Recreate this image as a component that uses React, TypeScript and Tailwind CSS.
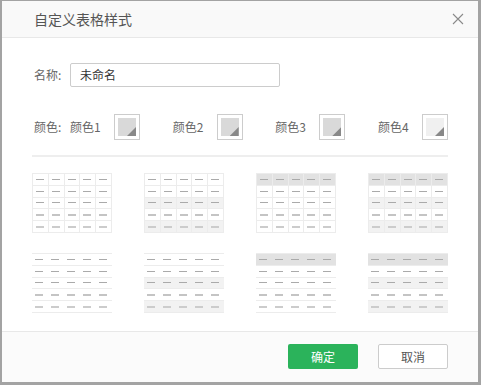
import React from "react";

type TileStyle = { grid: boolean; header: boolean; stripe: boolean };

const tiles: TileStyle[] = [
  { grid: true, header: false, stripe: false },
  { grid: true, header: false, stripe: true },
  { grid: true, header: true, stripe: false },
  { grid: true, header: true, stripe: true },
  { grid: false, header: false, stripe: false },
  { grid: false, header: false, stripe: true },
  { grid: false, header: true, stripe: false },
  { grid: false, header: true, stripe: true },
];

const rowBg = (t: TileStyle, r: number) => {
  if (r === 0 && t.header) return "bg-[#e2e2e2]";
  if (t.stripe && (r === 2 || r === 4)) return "bg-[#f2f2f2]";
  return "bg-white";
};

const dashCls = (r: number) =>
  r < 3 ? "h-px bg-[#aaaaaa]" : r === 3 ? "h-[2px] bg-[#c4c4c4]" : "h-[2px] bg-[#cccccc]";

const Tile: React.FC<{ t: TileStyle }> = ({ t }) => (
  <div className={`w-[80px] h-[60px] flex flex-col border-t border-[#ececec] ${t.grid ? "border-l" : ""}`}>
    {[0, 1, 2, 3, 4].map((r) => (
      <div key={r} className={`flex flex-1 border-b border-[#ececec] ${rowBg(t, r)}`}>
        {[0, 1, 2, 3, 4].map((c) => (
          <div
            key={c}
            className={`flex-1 flex items-center pl-[3px] ${t.grid ? "border-r border-[#ececec]" : ""}`}
          >
            <span className={`block w-[8px] ${dashCls(r)}`} />
          </div>
        ))}
      </div>
    ))}
  </div>
);

const Swatch: React.FC<{ light?: boolean }> = ({ light }) => (
  <div className="w-[26px] h-[26px] border border-[#cccccc] bg-white p-[3px]">
    <div className={`relative w-full h-full ${light ? "bg-[#f0f0f0]" : "bg-[#d9d9d9]"}`}>
      <div
        className="absolute right-0 bottom-0 w-[9px] h-[9px] bg-[#888888]"
        style={{ clipPath: "polygon(100% 0, 100% 100%, 0 100%)" }}
      />
    </div>
  </div>
);

export default function App() {
  return (
    <div
      className="w-[481px] h-[385px] bg-[#a3a3a3] pl-[2px] pt-[1px] pr-[3px] pb-[3px]"
      style={{ fontFamily: '"Noto Sans CJK SC", "Noto Sans", sans-serif' }}
    >
      <div className="w-full h-full bg-white flex flex-col">
        {/* Header */}
        <div className="h-[37px] shrink-0 bg-[#f9f9f9] border-b border-[#e8e8e8] flex items-center justify-between pl-[32px] pr-[14px]">
          <span className="text-[14px] text-[#555555]">自定义表格样式</span>
          <svg width="12" height="12" viewBox="0 0 12 12" className="text-[#8a8a8a]">
            <path d="M1 1L11 11M11 1L1 11" stroke="currentColor" strokeWidth="1.1" fill="none" />
          </svg>
        </div>

        {/* Body */}
        <div className="flex-1 px-[30px] pt-[25px] text-[12px] text-[#666666]">
          <div className="flex items-center">
            <span className="w-[38px] pl-[2px]">名称:</span>
            <div className="w-[210px] h-[24px] border border-[#cccccc] rounded-[2px] flex items-center pl-[9px] text-[#333333]">
              未命名
            </div>
          </div>

          <div className="flex items-center mt-[27px]">
            <span className="w-[38px] pl-[2px]">颜色:</span>
            <div className="flex-1 flex justify-between">
              {["颜色1", "颜色2", "颜色3", "颜色4"].map((l, i) => (
                <div key={l} className="flex items-center w-[70px] justify-between">
                  <span>{l}</span>
                  <Swatch light={i === 3} />
                </div>
              ))}
            </div>
          </div>

          <div className="h-[2px] bg-[#eeeeee] mt-[15px]" />

          <div className="grid grid-cols-4 gap-x-[32px] gap-y-[20px] mt-[16px]">
            {tiles.map((t, i) => (
              <Tile key={i} t={t} />
            ))}
          </div>
        </div>

        {/* Footer */}
        <div className="h-[51px] shrink-0 bg-[#fbfbfb] border-t border-[#e8e8e8] flex items-center justify-end gap-[20px] pr-[30px] pb-[1px]">
          <button className="w-[70px] h-[25px] rounded-[2px] bg-[#2bb35b] text-white text-[12px]">确定</button>
          <button className="w-[70px] h-[25px] rounded-[2px] bg-white border border-[#cccccc] text-[#555555] text-[12px]">
            取消
          </button>
        </div>
      </div>
    </div>
  );
}
